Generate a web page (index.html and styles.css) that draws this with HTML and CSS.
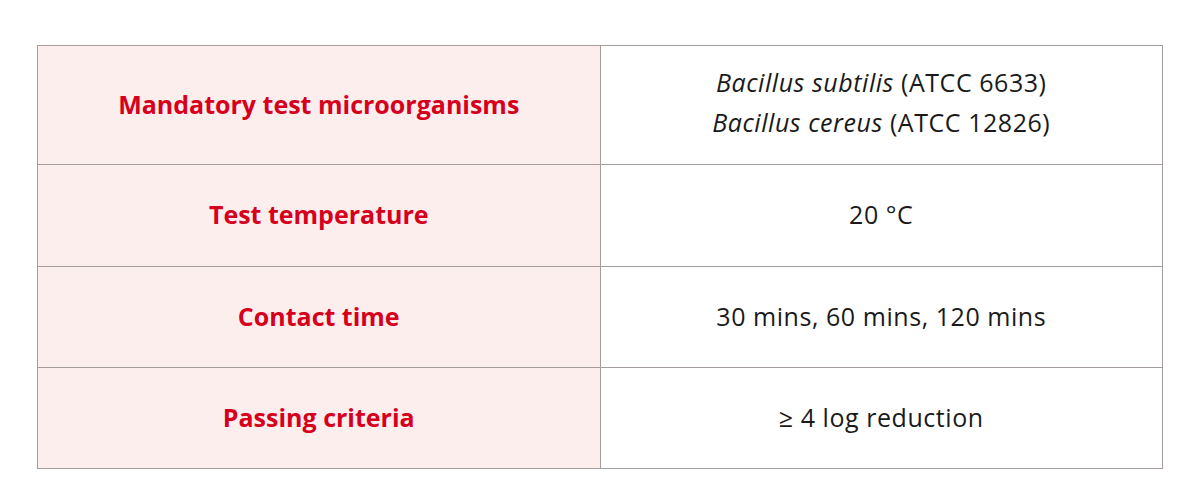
FILE: index.html
```html
<!DOCTYPE html>
<html>
<head>
<meta charset="utf-8">
<link rel="stylesheet" href="styles.css">
</head>
<body>
<div class="wrap">
  <table class="spec">
    <tr class="r1">
      <th>Mandatory test microorganisms</th>
      <td class="multi"><div class="line"><em>Bacillus subtilis</em> (ATCC 6633)</div><div class="line"><em>Bacillus cereus</em> (ATCC 12826)</div></td>
    </tr>
    <tr class="r2">
      <th>Test temperature</th>
      <td>20 °C</td>
    </tr>
    <tr>
      <th>Contact time</th>
      <td>30 mins, 60 mins, 120 mins</td>
    </tr>
    <tr>
      <th>Passing criteria</th>
      <td>≥ 4 log reduction</td>
    </tr>
  </table>
</div>
</body>
</html>
```
FILE: styles.css
```css
html, body { margin: 0; padding: 0; background: #fff; }
.wrap { padding: 45px 37px 0 37px; }
.spec {
  width: 1126px;
  border-collapse: collapse;
  table-layout: fixed;
  font-family: "Open Sans", Lato, sans-serif;
  font-size: 25px;
  color: #1a1a1a;
}
.spec th, .spec td {
  border: 1px solid #a39d9d;
  text-align: center;
  vertical-align: middle;
  padding: 0 0 3px 0;
  height: 97px;
}
.spec tr.r1 th { height: 116px; padding-bottom: 2px; }
.spec tr.r1 td.multi { height: 112px; padding-bottom: 6px; }
.spec tr.r2 th, .spec tr.r2 td { height: 98px; }
.spec th {
  background: #fdeeee;
  color: #d6001c;
  font-weight: 700;
}
.spec td { font-weight: 400; letter-spacing: 0.55px; }
.line { line-height: 40px; }
em { font-style: italic; }
```
